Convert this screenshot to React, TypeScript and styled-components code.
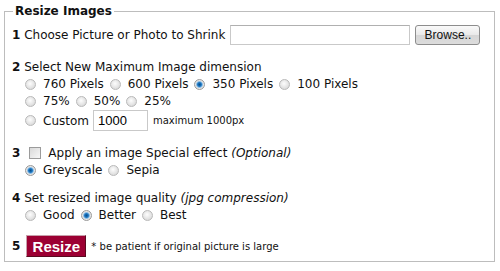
import React from "react";
import styled, { createGlobalStyle } from "styled-components";

const Global = createGlobalStyle`
  html, body { margin: 0; padding: 0; background: #fff; }
  body { font-family: "DejaVu Sans", Verdana, sans-serif; font-size: 12px; color: #111; }
`;

const Page = styled.div`
  padding: 4px 5px 0 4px;
  width: 491px;
`;

const Fieldset = styled.fieldset`
  margin: 0;
  border: 1px solid #bdbdbd;
  padding: 0 7px 4px 7px;
  min-width: 0;
`;

const Legend = styled.legend`
  font-weight: bold;
  font-size: 12px;
  padding: 0 2px;
  margin-left: 1px;
  color: #111;
`;

const Section = styled.div<{ $top: number }>`
  margin-top: ${(p) => p.$top}px;
  display: flex;
  flex-direction: column;
  gap: 1px;
`;

const StepRow = styled.div<{ $h?: number }>`
  display: flex;
  align-items: center;
  gap: 5px;
  height: ${(p) => p.$h ?? 16}px;
  white-space: nowrap;
`;

const Num = styled.b`
  font-weight: bold;
`;

const Em = styled.i`
  font-style: italic;
`;

const OptionRow = styled.div<{ $h?: number }>`
  display: flex;
  align-items: center;
  padding-left: 13px;
  height: ${(p) => p.$h ?? 16}px;
  white-space: nowrap;
`;

const Opt = styled.label`
  display: inline-flex;
  align-items: center;
  gap: 7px;
  margin-right: 6px;
`;

const Radio = styled.input.attrs({ type: "radio" })`
  appearance: none;
  margin: 0;
  width: 11px;
  height: 11px;
  border-radius: 50%;
  border: 1px solid #b9b9b9;
  background: radial-gradient(circle at 45% 40%, #fdfdfd 0%, #e2e2e2 60%, #cfcfcf 100%);
  box-sizing: border-box;
  &:checked {
    background: radial-gradient(circle at 50% 50%, #0a4f8a 0%, #1b76c2 30%, #7fb6e2 45%, #e8e8e8 60%, #d0d0d0 100%);
    border-color: #9a9a9a;
  }
`;

const Check = styled.input.attrs({ type: "checkbox" })`
  appearance: none;
  margin: 0 2px 0 4px;
  width: 12px;
  height: 12px;
  border: 1px solid #9b9b9b;
  background: linear-gradient(135deg, #d9d9d9, #f7f7f7);
  box-sizing: border-box;
`;

const FileInput = styled.input`
  width: 180px;
  height: 20px;
  box-sizing: border-box;
  border: 1px solid #c9c9c9;
  border-top-color: #b0b0b0;
  margin: 0;
  padding: 0 3px;
  font: inherit;
`;

const Browse = styled.button`
  margin-left: 5px;
  width: 65px;
  height: 20px;
  box-sizing: border-box;
  border: 1px solid #8d8d8d;
  border-radius: 3px;
  background: linear-gradient(#fafafa, #e9e9e9 50%, #d6d6d6 51%, #dcdcdc);
  font-family: "Liberation Sans", Arial, sans-serif;
  font-size: 12px;
  color: #111;
  padding: 0;
`;

const SmallInput = styled.input`
  width: 55px;
  height: 21px;
  box-sizing: border-box;
  border: 1px solid #c9c9c9;
  padding: 0 4px;
  font-family: "Liberation Sans", Arial, sans-serif;
  font-size: 13px;
  margin: 0 5px 0 -2px;
`;

const Small = styled.span`
  font-size: 10px;
`;

const ResizeButton = styled.button`
  width: 60px;
  height: 22px;
  box-sizing: border-box;
  background: #9c0033;
  color: #fff;
  border: 1px solid;
  border-color: #c8a0ab #5a0a20 #5a0a20 #c8a0ab;
  font-family: "Liberation Sans", Arial, sans-serif;
  font-weight: bold;
  font-size: 15px;
  padding: 0;
  margin-left: 1px;
`;

export default function App() {
  return (
    <>
      <Global />
      <Page>
        <Fieldset>
          <Legend>Resize Images</Legend>
          <Section $top={7}>
            <StepRow $h={20}>
              <span>
                <Num>1</Num> Choose Picture or Photo to Shrink
              </span>
              <span>
                <FileInput type="text" />
                <Browse>Browse..</Browse>
              </span>
            </StepRow>
          </Section>
          <Section $top={14}>
            <StepRow>
              <span>
                <Num>2</Num> Select New Maximum Image dimension
              </span>
            </StepRow>
            <OptionRow>
              <Opt><Radio name="dim" />760 Pixels</Opt>
              <Opt><Radio name="dim" />600 Pixels</Opt>
              <Opt><Radio name="dim" defaultChecked />350 Pixels</Opt>
              <Opt><Radio name="dim" />100 Pixels</Opt>
            </OptionRow>
            <OptionRow>
              <Opt><Radio name="dim" />75%</Opt>
              <Opt><Radio name="dim" />50%</Opt>
              <Opt><Radio name="dim" />25%</Opt>
            </OptionRow>
            <OptionRow $h={21}>
              <Opt><Radio name="dim" />Custom</Opt>
              <SmallInput type="text" defaultValue="1000" />
              <Small>maximum 1000px</Small>
            </OptionRow>
          </Section>
          <Section $top={14}>
            <StepRow>
              <Num>3</Num>
              <Check />
              <span>
                Apply an image Special effect <Em>(Optional)</Em>
              </span>
            </StepRow>
            <OptionRow>
              <Opt><Radio name="fx" defaultChecked />Greyscale</Opt>
              <Opt><Radio name="fx" />Sepia</Opt>
            </OptionRow>
          </Section>
          <Section $top={12}>
            <StepRow>
              <span>
                <Num>4</Num> Set resized image quality <Em>(jpg compression)</Em>
              </span>
            </StepRow>
            <OptionRow>
              <Opt><Radio name="q" />Good</Opt>
              <Opt><Radio name="q" defaultChecked />Better</Opt>
              <Opt><Radio name="q" />Best</Opt>
            </OptionRow>
          </Section>
          <Section $top={12}>
            <StepRow $h={22}>
              <Num>5</Num>
              <ResizeButton>Resize</ResizeButton>
              <Small>* be patient if original picture is large</Small>
            </StepRow>
          </Section>
        </Fieldset>
      </Page>
    </>
  );
}
